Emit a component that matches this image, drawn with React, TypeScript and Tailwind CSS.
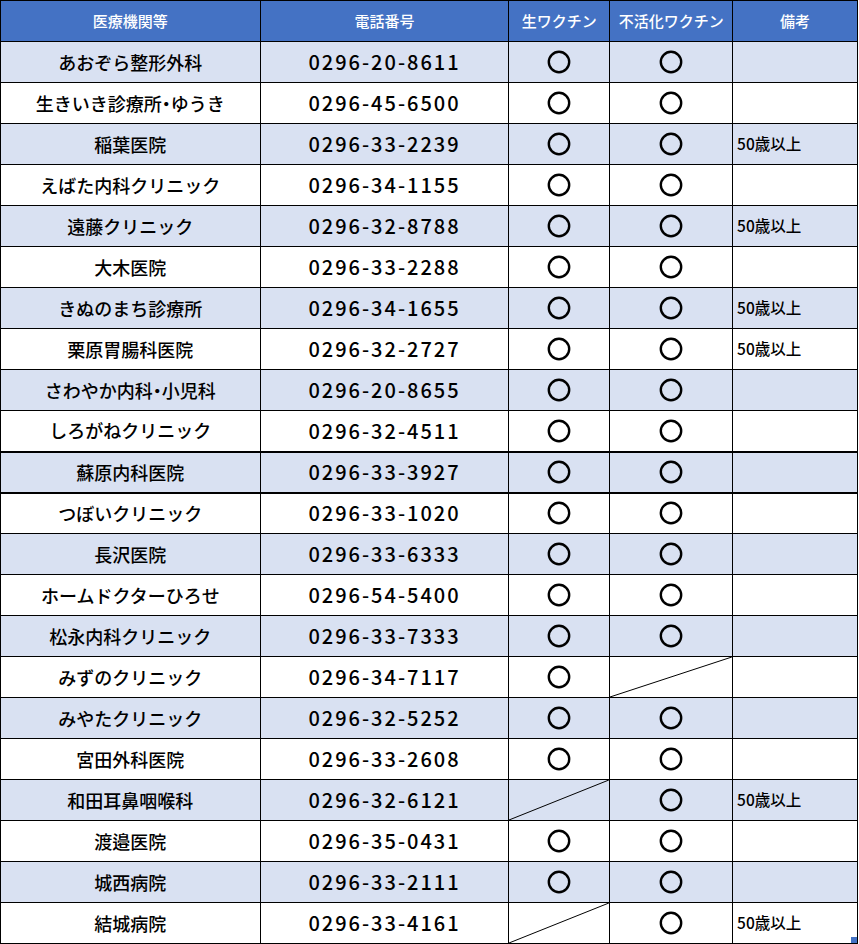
import React from "react";

type Row = {
  name: string;
  tel: string;
  live: boolean;
  inactive: boolean;
  note?: string;
};

const ROWS: Row[] = [
  { name: "あおぞら整形外科", tel: "0296-20-8611", live: true, inactive: true },
  { name: "生きいき診療所・ゆうき", tel: "0296-45-6500", live: true, inactive: true },
  { name: "稲葉医院", tel: "0296-33-2239", live: true, inactive: true, note: "50歳以上" },
  { name: "えばた内科クリニック", tel: "0296-34-1155", live: true, inactive: true },
  { name: "遠藤クリニック", tel: "0296-32-8788", live: true, inactive: true, note: "50歳以上" },
  { name: "大木医院", tel: "0296-33-2288", live: true, inactive: true },
  { name: "きぬのまち診療所", tel: "0296-34-1655", live: true, inactive: true, note: "50歳以上" },
  { name: "栗原胃腸科医院", tel: "0296-32-2727", live: true, inactive: true, note: "50歳以上" },
  { name: "さわやか内科・小児科", tel: "0296-20-8655", live: true, inactive: true },
  { name: "しろがねクリニック", tel: "0296-32-4511", live: true, inactive: true },
  { name: "蘇原内科医院", tel: "0296-33-3927", live: true, inactive: true },
  { name: "つぼいクリニック", tel: "0296-33-1020", live: true, inactive: true },
  { name: "長沢医院", tel: "0296-33-6333", live: true, inactive: true },
  { name: "ホームドクターひろせ", tel: "0296-54-5400", live: true, inactive: true },
  { name: "松永内科クリニック", tel: "0296-33-7333", live: true, inactive: true },
  { name: "みずのクリニック", tel: "0296-34-7117", live: true, inactive: false },
  { name: "みやたクリニック", tel: "0296-32-5252", live: true, inactive: true },
  { name: "宮田外科医院", tel: "0296-33-2608", live: true, inactive: true },
  { name: "和田耳鼻咽喉科", tel: "0296-32-6121", live: false, inactive: true, note: "50歳以上" },
  { name: "渡邉医院", tel: "0296-35-0431", live: true, inactive: true },
  { name: "城西病院", tel: "0296-33-2111", live: true, inactive: true },
  { name: "結城病院", tel: "0296-33-4161", live: false, inactive: true, note: "50歳以上" },
];

const FONT = { fontFamily: '"Noto Sans CJK JP", "Noto Sans", sans-serif' };

function Maru() {
  return (
    <svg width="24" height="24" viewBox="0 0 24 24" className="block">
      <circle cx="12" cy="12" r="10.2" fill="none" stroke="#000" strokeWidth="2.4" />
    </svg>
  );
}

// Excel-style "not available" cell: a thin diagonal from bottom-left to top-right.
function Slash() {
  return (
    <svg className="absolute inset-0 h-full w-full" preserveAspectRatio="none" viewBox="0 0 100 100">
      <line x1="0" y1="100" x2="100" y2="0" stroke="#000" strokeWidth="1" vectorEffect="non-scaling-stroke" />
    </svg>
  );
}

export default function App() {
  return (
    <div className="bg-white" style={FONT}>
      <table className="border-collapse text-black" style={{ width: 858 }}>
        <colgroup>
          <col style={{ width: 260 }} />
          <col style={{ width: 249 }} />
          <col style={{ width: 101 }} />
          <col style={{ width: 123 }} />
          <col style={{ width: 125 }} />
        </colgroup>
        <thead>
          <tr className="h-[41px] bg-[#4472C4] text-[15px] text-white">
            <th className="border border-black font-medium">医療機関等</th>
            <th className="border border-black font-medium">電話番号</th>
            <th className="border border-black font-medium">生ワクチン</th>
            <th className="border border-black font-medium">不活化ワクチン</th>
            <th className="border border-black font-medium">備考</th>
          </tr>
        </thead>
        <tbody>
          {ROWS.map((r, i) => {
            const thick = i === 10 ? "border-y-2" : "";
            return (
              <tr key={r.name} className={`h-[41px] ${i % 2 === 0 ? "bg-[#D9E1F2]" : "bg-white"}`}>
                {/* halt: half-width middle dot, as the source font sets it */}
                <td className={`border border-black p-0 text-center text-[18px] font-medium [font-feature-settings:'halt'] ${thick}`}>
                  {r.name}
                </td>
                <td className={`border border-black p-0 text-center text-[20px] font-medium tracking-[2px] ${thick}`}>{r.tel}</td>
                <td className={`relative border border-black p-0 ${thick}`}>
                  {r.live ? (
                    <div className="flex justify-center">
                      <Maru />
                    </div>
                  ) : (
                    <Slash />
                  )}
                </td>
                <td className={`relative border border-black p-0 ${thick}`}>
                  {r.inactive ? (
                    <div className="flex justify-center">
                      <Maru />
                    </div>
                  ) : (
                    <Slash />
                  )}
                </td>
                <td className={`relative border border-black py-0 pl-1 text-[15.5px] font-medium ${thick}`}>
                  {r.note}
                  {i === ROWS.length - 1 && (
                    <span className="absolute bottom-0 right-0 h-[6px] w-[6px] bg-[#4472C4]" />
                  )}
                </td>
              </tr>
            );
          })}
        </tbody>
      </table>
    </div>
  );
}
